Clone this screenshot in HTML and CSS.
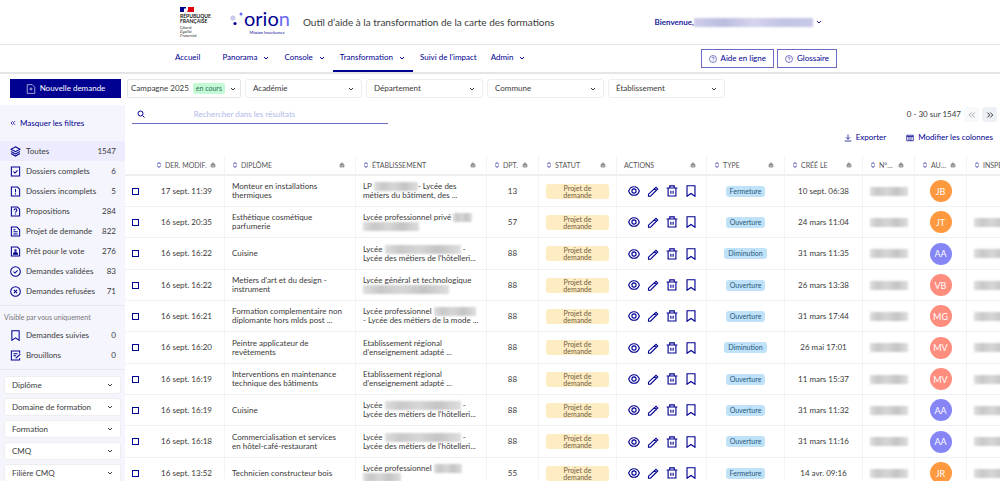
FILE: index.html
```html
<!DOCTYPE html>
<html lang="fr">

<head>
    <meta charset="UTF-8">
    <meta name="viewport" content="width=device-width, initial-scale=1.0">
    <title>Orion - Transformation</title>
    <link rel="stylesheet" href="styles.css">
</head>

<body>
    <svg class="sprite" aria-hidden="true">
        <symbol id="chevron" viewBox="0 0 8 8"><path d="M2 3l2 2 2-2" /></symbol>
        <symbol id="help" viewBox="0 0 16 16"><circle cx="8" cy="8" r="7" /><path d="M5.8 6.4a2.2 2.2 0 1 1 3.3 1.9c-.8.5-1.1.8-1.1 1.6M8 11.3v1.3" /></symbol>
        <symbol id="file-add" viewBox="0 0 16 16"><path d="M2 1h8l4 4v10H2zM8 5.500v5M5.500 8h5" /></symbol>
        <symbol id="search" viewBox="0 0 16 16"><circle cx="7" cy="7" r="5" /><path d="M11 11l4 4" /></symbol>
        <symbol id="left" viewBox="0 0 16 16"><path d="M7.500 3l-5 5 5 5M13.500 3l-5 5 5 5" /></symbol>
        <symbol id="right" viewBox="0 0 16 16"><path d="M2.500 3l5 5-5 5M8.500 3l5 5-5 5" /></symbol>
        <symbol id="stack" viewBox="0 0 16 16"><path d="M8 1.200l6.500 3.600L8 8.400 1.500 4.800zM1.500 8L8 11.600 14.500 8M1.500 11L8 14.600l6.500-3.600" /></symbol>
        <symbol id="box-check" viewBox="0 0 16 16"><path d="M2 1.500h12v13H2zM5 8l2.200 2.200L11 6.300" /></symbol>
        <symbol id="file-alert" viewBox="0 0 16 16"><path d="M2 1.500h9l3 3v10H2zM8 4.500v4.500M8 10.500v1.800" /></symbol>
        <symbol id="file-question" viewBox="0 0 16 16"><path d="M2 1.500h9l3 3v10H2zM6 6.200a2 2 0 1 1 3 1.700c-.7.400-1 .7-1 1.500M8 10.800v1.500" /></symbol>
        <symbol id="file-text" viewBox="0 0 16 16"><path d="M2 1.500h8l4 4v9H2zM5 5.500h3M5 8.500h6M5 11.500h6" /></symbol>
        <symbol id="file-user" viewBox="0 0 16 16"><path d="M2 1.500h9l3 3v10H2z" /><path fill="currentColor" d="M5 12c0-3.500 6-3.500 6 0z" /><circle cx="8" cy="6.500" r="1" /></symbol>
        <symbol id="circle-check" viewBox="0 0 16 16"><circle cx="8" cy="8" r="7" /><path d="M5 8l2.200 2.200L11 6.300" /></symbol>
        <symbol id="circle-cross" viewBox="0 0 16 16"><circle cx="8" cy="8" r="7" /><path d="M5.700 5.700l4.600 4.600M10.300 5.700l-4.600 4.600" /></symbol>
        <symbol id="bookmark" viewBox="0 0 16 16"><path d="M2.700 1h10.600v14L8 11.300 2.700 15z" /></symbol>
        <symbol id="draft" viewBox="0 0 16 16"><path d="M14 5V1.500H2v13h12V12M5 5.500h6M5 8.500h4M8 11.500l1.500-.3L15 6" /></symbol>
        <symbol id="sort" viewBox="0 0 8 8"><path d="M1.500 3L4 .8 6.500 3M1.500 5L4 7.200 6.500 5" /></symbol>
        <symbol id="lock" viewBox="0 0 8 8"><path d="M1.500 3.500h5v3h-5zM2.500 3.500V2.500C2.500.8 5.500.8 5.500 2.500M3 5h2" /></symbol>
        <symbol id="eye" viewBox="0 0 16 16"><path d="M.9 8C2 4.500 5 2.300 8 2.300S14 4.500 15.100 8C14 11.500 11 13.700 8 13.700S2 11.500.9 8z" /><circle cx="8" cy="8" r="2.800" /></symbol>
        <symbol id="pencil" viewBox="0 0 16 16"><path d="M2 15v-2.800L12 3l2.300 2.300-9.600 9.700zM9.800 5l2.500 2.500" /></symbol>
        <symbol id="trash" viewBox="0 0 16 16"><path d="M.8 4h14.400M5 4V1.200h6V4M2.800 4v10.700h10.400V4M6.500 7.500v4M9.500 7.500v4" /></symbol>
        <symbol id="export" viewBox="0 0 16 16"><path d="M8 1v9M4 6.500l4 4 4-4M1.500 14h13" /></symbol>
        <symbol id="columns" viewBox="0 0 16 16"><path d="M1.500 2.500h13v11h-13zM1.500 5h13M6 5v8.500M10 5v8.500" /></symbol>
    </svg>

    <header class="header">
        <div class="container header-content">
            <div class="republique">
                <svg class="flag" viewBox="0 0 14 5"><path fill="#000091" d="M0 0h6v5H0z" /><path fill="#fff" d="M4 1.500h3l1 2L6 5H4z" /><path fill="#e1000f" d="M8 0h6v5H7l1-2z" /></svg>
                <strong>RÉPUBLIQUE<br>FRANÇAISE</strong>
                <em>Liberté<br>Égalité<br>Fraternité</em>
            </div>
            <div class="orion">
                <svg class="dots" viewBox="0 0 14 14"><circle cx="3" cy="6" r="2.600" fill="#cacaf0" /><circle cx="11" cy="2" r="1.500" fill="#6a6af4" /><circle cx="5" cy="11.500" r="1.600" fill="#000091" /></svg>
                <div>
                    <span class="orion-name">orio<span>n</span></span>
                    <span class="orion-mission">Mission InserJeunes</span>
                </div>
            </div>
            <p class="tagline">Outil d’aide à la transformation de la carte des formations</p>
            <button class="user" type="button">Bienvenue, <span class="redacted user-mail"></span><svg class="icon chevron"><use href="#chevron" /></svg></button>
        </div>
    </header>

    <nav class="nav">
        <div class="container nav-content">
            <a class="nav-link first" href="#">Accueil</a>
            <a class="nav-link" href="#">Panorama <svg class="icon chevron"><use href="#chevron" /></svg></a>
            <a class="nav-link" href="#">Console <svg class="icon chevron"><use href="#chevron" /></svg></a>
            <a class="nav-link active" href="#">Transformation <svg class="icon chevron"><use href="#chevron" /></svg></a>
            <a class="nav-link" href="#">Suivi de l'impact</a>
            <a class="nav-link" href="#">Admin <svg class="icon chevron"><use href="#chevron" /></svg></a>
            <div class="nav-buttons">
                <button type="button"><svg class="icon thin"><use href="#help" /></svg>Aide en ligne</button>
                <button type="button"><svg class="icon thin"><use href="#help" /></svg>Glossaire</button>
            </div>
        </div>
    </nav>

    <div class="filters">
        <button class="new-request" type="button"><svg class="icon"><use href="#file-add" /></svg>Nouvelle demande</button>
        <button class="campaign" type="button">Campagne 2025 <span class="current">en cours</span><svg class="icon chevron"><use href="#chevron" /></svg></button>
        <select class="select" aria-label="Académie"><option>Académie</option></select>
        <select class="select" aria-label="Département"><option>Département</option></select>
        <select class="select" aria-label="Commune"><option>Commune</option></select>
        <select class="select" aria-label="Établissement"><option>Établissement</option></select>
    </div>

    <div class="layout">
        <aside class="sidebar">
            <button class="hide-filters" type="button"><svg class="icon"><use href="#left" /></svg>Masquer les filtres</button>
            <ul class="status-list">
                <li><a class="selected" href="#"><svg class="icon"><use href="#stack" /></svg>Toutes<span>1547</span></a></li>
                <li><a href="#"><svg class="icon"><use href="#box-check" /></svg>Dossiers complets<span>6</span></a></li>
                <li><a href="#"><svg class="icon"><use href="#file-alert" /></svg>Dossiers incomplets<span>5</span></a></li>
                <li><a href="#"><svg class="icon"><use href="#file-question" /></svg>Propositions<span>284</span></a></li>
                <li><a href="#"><svg class="icon"><use href="#file-text" /></svg>Projet de demande<span>822</span></a></li>
                <li><a href="#"><svg class="icon"><use href="#file-user" /></svg>Prêt pour le vote<span>276</span></a></li>
                <li><a href="#"><svg class="icon"><use href="#circle-check" /></svg>Demandes validées<span>83</span></a></li>
                <li><a href="#"><svg class="icon"><use href="#circle-cross" /></svg>Demandes refusées<span>71</span></a></li>
            </ul>
            <p class="private">Visible par vous uniquement</p>
            <ul class="status-list">
                <li><a href="#"><svg class="icon"><use href="#bookmark" /></svg>Demandes suivies<span>0</span></a></li>
                <li><a href="#"><svg class="icon"><use href="#draft" /></svg>Brouillons<span>0</span></a></li>
            </ul>
            <div class="side-filters">
                <select class="select" aria-label="Diplôme"><option>Diplôme</option></select>
                <select class="select" aria-label="Domaine de formation"><option>Domaine de formation</option></select>
                <select class="select" aria-label="Formation"><option>Formation</option></select>
                <select class="select" aria-label="CMQ"><option>CMQ</option></select>
                <select class="select" aria-label="Filière CMQ"><option>Filière CMQ</option></select>
            </div>
        </aside>

        <main class="main">
            <div class="toolbar">
                <label class="search"><svg class="icon"><use href="#search" /></svg><input type="search" aria-label="Rechercher" placeholder="Rechercher dans les résultats"></label>
                <div class="pagination">
                    0 - 30 sur 1547
                    <button type="button" aria-label="Page précédente" disabled><svg class="icon"><use href="#left" /></svg></button>
                    <button type="button" aria-label="Page suivante"><svg class="icon"><use href="#right" /></svg></button>
                </div>
            </div>
            <div class="table-actions">
                <button type="button"><svg class="icon"><use href="#export" /></svg>Exporter</button>
                <button type="button"><svg class="icon"><use href="#columns" /></svg>Modifier les colonnes</button>
            </div>
            <table class="table">
                <colgroup>
                    <col class="c-check"><col class="c-modif"><col class="c-wide"><col class="c-wide"><col class="c-small"><col class="c-medium">
                    <col class="c-actions"><col class="c-medium"><col class="c-medium"><col class="c-small"><col class="c-small"><col class="c-wide">
                </colgroup>
                <thead>
                    <tr id="head"></tr>
                </thead>
                <tbody id="rows"></tbody>
            </table>
        </main>
    </div>
    <script src="script.js"></script>
</body>

</html>
```

FILE: styles.css
```css
*,
*::before,
*::after {
    box-sizing: border-box;
}

body {
    display: flex;
    flex-direction: column;
    height: 100vh;
    margin: 0;
    overflow: hidden;
    font-family: Lato, "Noto Sans", sans-serif;
    font-size: 8px;
    line-height: 9px;
    color: #3a3a3a;
    background: #fff;
}

p,
ul {
    margin: 0;
    padding: 0;
    list-style: none;
}

a {
    color: inherit;
    text-decoration: none;
}

button,
input,
select {
    margin: 0;
    padding: 0;
    border: 0;
    font: inherit;
    color: inherit;
    background: none;
}

button {
    display: flex;
    align-items: center;
    cursor: pointer;
}

.sprite {
    display: none;
}

.icon {
    flex: none;
    width: 8px;
    height: 8px;
    fill: none;
    stroke: currentColor;
    stroke-width: 2;
}

.icon.thin {
    stroke-width: 1;
}

.icon.chevron {
    stroke-width: 1;
}

.redacted {
    display: inline-block;
    height: 9px;
    vertical-align: top;
    background: linear-gradient(90deg, #dedede, #c8c8c8 20%, #d6d6d6 45%, #c4c4c4 70%, #dedede);
    filter: blur(1px);
}

.container {
    display: flex;
    align-items: center;
    width: 100%;
    max-width: 674px;
    margin: 0 auto;
}

/* header */
.header {
    flex: none;
    border-bottom: 1px solid #e5e5e5;
}

.header-content {
    height: 44px;
    padding: 0 14px 0 17px;
}

.republique {
    display: flex;
    flex-direction: column;
    width: 50px;
    font-size: 5px;
    line-height: 5px;
    color: #161616;
}

.flag {
    width: 14px;
    height: 5px;
    margin-bottom: 2px;
}

.republique em {
    margin-top: 2px;
    font-family: "Liberation Serif", serif;
    font-size: 4px;
    line-height: 4px;
}

.orion {
    display: flex;
    margin-bottom: 3px;
    color: #000091;
}

.dots {
    width: 14px;
    height: 14px;
    margin-top: 6px;
}

.orion-name {
    display: block;
    font-size: 20px;
    line-height: 24px;
}

.orion-name span {
    color: #6a6af4;
}

.orion-mission {
    display: block;
    font-size: 4px;
    line-height: 5px;
    text-align: center;
}

.tagline {
    margin-left: 13px;
    font-size: 10px;
    line-height: 12px;
}

.user {
    margin-left: auto;
    font-weight: 700;
    color: #22229c;
}

.user-mail {
    width: 119px;
    margin-right: 2px;
    background: linear-gradient(90deg, #cdcdea, #bcbce0 25%, #d4d4ee 50%, #c2c2e4 75%, #c8c8e8);
}

/* nav */
.nav {
    flex: none;
    border-bottom: 2px solid #e5e5e5;
    color: #000091;
}

.nav-content {
    height: 27px;
}

.nav-link {
    display: flex;
    align-items: center;
    gap: 5px;
    height: 27px;
    padding: 0 7px;
    border-bottom: 2px solid transparent;
}

.nav-link.first {
    margin: 0 8px 0 5px;
}

.nav-link.active {
    border-color: #000091;
}

.nav-buttons {
    display: flex;
    gap: 3px;
    margin-left: auto;
}

.nav-buttons button {
    gap: 4px;
    height: 19px;
    padding: 0 7px;
    border: 1px solid #6a6ac0;
}

/* filters */
.filters {
    display: flex;
    flex: none;
    gap: 4px;
    padding: 5px 10px 7px;
}

.new-request {
    justify-content: center;
    gap: 4px;
    width: 111px;
    height: 19px;
    margin-right: 2px;
    color: #fff;
    background: #000091;
}

.new-request .icon {
    width: 10px;
    height: 10px;
    stroke-width: 1;
}

.campaign {
    width: 114px;
    height: 19px;
    padding: 0 3px;
    border: 1px solid #e5e5e5;
    border-radius: 2px;
}

.current {
    margin: 0 auto 0 4px;
    padding: 1px 3px;
    border-radius: 2px;
    font-size: 7px;
    color: #297254;
    background: #c3fad5;
}

.select {
    appearance: none;
    width: 117px;
    height: 19px;
    padding: 0 7px;
    border: 1px solid #eee;
    border-radius: 3px;
    background: #fff url("data:image/svg+xml,%3Csvg xmlns='http://www.w3.org/2000/svg' width='8' height='8' fill='none' stroke='%233a3a3a'%3E%3Cpath d='M2 3l2 2 2-2'/%3E%3C/svg%3E") no-repeat right 6px center;
}

.layout {
    display: flex;
    flex: 1;
    min-height: 0;
}

/* sidebar */
.sidebar {
    flex: none;
    width: 125px;
    overflow: hidden;
    background: #f5f5fe;
}

.hide-filters {
    gap: 4px;
    height: 36px;
    padding: 0 10px;
    color: #000091;
}

.hide-filters .icon {
    width: 6px;
    height: 6px;
}

.status-list {
    padding-bottom: 4px;
    border-bottom: 1px solid #e8e8f4;
}

.status-list a {
    display: flex;
    align-items: center;
    gap: 5px;
    height: 20px;
    padding: 0 9px 0 10px;
}

.status-list a.selected {
    background: #ececfe;
}

.status-list .icon {
    width: 11px;
    height: 11px;
    stroke-width: 1.5;
    color: #000091;
}

.status-list span {
    margin-left: auto;
}

.private {
    padding: 7px 4px 3px;
    font-size: 7px;
    color: #777;
}

.side-filters {
    display: grid;
    gap: 4px;
    padding: 6px 4px;
}

.side-filters .select {
    width: 100%;
    height: 18px;
}

/* main */
.main {
    flex: 1;
    min-width: 0;
    overflow: hidden;
}

.toolbar {
    display: flex;
    justify-content: space-between;
    align-items: center;
    padding: 0 3px 0 7px;
}

.search {
    display: flex;
    align-items: center;
    width: 256px;
    height: 19px;
    padding-left: 5px;
    border-bottom: 1px solid #6a6ac0;
    color: #000091;
}

.search input {
    flex: 1;
    margin-right: 34px;
    outline: none;
    text-align: center;
}

.search input::placeholder {
    color: #b1b9e8;
}

.pagination {
    display: flex;
    align-items: center;
    gap: 3px;
}

.pagination button {
    justify-content: center;
    width: 15px;
    height: 15px;
    border-radius: 3px;
    background: #edf0f5;
}

.pagination button:disabled {
    color: #aaa;
    background: #f8f9fb;
}

.table-actions {
    display: flex;
    justify-content: flex-end;
    gap: 20px;
    padding: 9px 7px 14px;
    color: #000091;
}

.table-actions button {
    gap: 4px;
}

.table-actions .icon {
    stroke-width: 1.5;
}

.table {
    width: 970px;
    table-layout: fixed;
    border-collapse: separate;
    border-spacing: 0;
}

.c-check {
    width: 24px;
}

.c-modif {
    width: 76px;
}

.c-wide {
    width: 131px;
}

.c-small {
    width: 52px;
}

.c-medium {
    width: 78px;
}

.c-actions {
    width: 90px;
}

.table th {
    height: 20px;
    padding: 0 10px 0 7px;
    border-right: 1px solid #f4f4f6;
    border-bottom: 2px solid #eee;
    font-size: 7px;
    font-weight: 400;
    color: #555;
}

.table th:first-child,
.table td:first-child {
    padding: 0 0 0 7px;
    border-right: 0;
}

.th-content {
    display: flex;
    align-items: center;
    gap: 3px;
    white-space: nowrap;
}

.th-content .icon {
    width: 6px;
    height: 6px;
    stroke-width: 1;
}

.th-content .icon.sort {
    color: #000091;
}

.th-content .icon.lock {
    margin-left: auto;
}

.table td {
    height: 31px;
    padding: 0 7px;
    border-right: 1px solid #f4f4f6;
    border-bottom: 1px solid #eef0f4;
}

.table tr:nth-child(3n) td {
    height: 32px;
}

.table td.center {
    padding: 0;
    text-align: center;
}

.table input {
    display: block;
    appearance: none;
    width: 7px;
    height: 7px;
    border: 1px solid #000091;
}

.status {
    display: block;
    padding: 1px 12px 0;
    border-radius: 3px;
    font-size: 7px;
    line-height: 7px;
    text-align: center;
    color: #716043;
    background: #feecc2;
}

.type {
    display: inline-block;
    padding: 1px 4px;
    border-radius: 3px;
    font-size: 7px;
    color: #27587c;
    background: #bfe2f8;
}

.row-actions {
    display: flex;
    gap: 7px;
    padding-left: 4px;
    color: #000091;
}

.row-actions .icon {
    width: 12px;
    height: 12px;
    stroke-width: 1.5;
}

.avatar {
    display: flex;
    align-items: center;
    justify-content: center;
    width: 22px;
    height: 22px;
    margin: 0 auto;
    border-radius: 50%;
    font-size: 9px;
    color: #fff;
}

.avatar.orange {
    background: #ff9940;
}

.avatar.purple {
    background: #8585f6;
}

.avatar.coral {
    background: #ff8d7e;
}
```

FILE: script.js
```js
const columns = ['DER. MODIF.', 'DIPLÔME', 'ÉTABLISSEMENT', 'DPT.', 'STATUT', 'ACTIONS', 'TYPE', 'CRÉÉ LE', 'N°…', 'AU…', 'INSPECTEUR'];

// a number in the school name is the width of a masked part
const rows = [
    ['17 sept. 11:39', 'Monteur en installations<br>thermiques', ['LP ', 44, '- Lycée des<br>métiers du bâtiment, des ...'], 13, 'Fermeture', '10 sept. 06:38', 'JB', 'orange', 0],
    ['16 sept. 20:35', 'Esthétique cosmétique<br>parfumerie', ['Lycée professionnel privé ', 19, '<br>', 56], 57, 'Ouverture', '24 mars 11:04', 'JT', 'orange', 40],
    ['16 sept. 16:22', 'Cuisine', ['Lycée ', 76, ' -<br>Lycée des métiers de l\'hôtelleri...'], 88, 'Diminution', '31 mars 11:35', 'AA', 'purple', 40],
    ['16 sept. 16:22', 'Metiers d\'art et du design -<br>instrument', ['Lycée général et technologique<br>', 86], 88, 'Ouverture', '26 mars 13:38', 'VB', 'coral', 40],
    ['16 sept. 16:21', 'Formation complementaire non<br>diplomante hors mlds post ...', ['Lycée professionnel ', 42, '<br>- Lycée des métiers de la mode ...'], 88, 'Ouverture', '31 mars 17:44', 'MG', 'coral', 40],
    ['16 sept. 16:20', 'Peintre applicateur de<br>revêtements', ['Etablissement régional<br>d\'enseignement adapté ...'], 88, 'Diminution', '26 mai 17:01', 'MV', 'coral', 40],
    ['16 sept. 16:19', 'Interventions en maintenance<br>technique des bâtiments', ['Etablissement régional<br>d\'enseignement adapté ...'], 88, 'Ouverture', '11 mars 15:37', 'MV', 'coral', 40],
    ['16 sept. 16:19', 'Cuisine', ['Lycée ', 76, ' -<br>Lycée des métiers de l\'hôtelleri...'], 88, 'Ouverture', '31 mars 11:32', 'AA', 'purple', 40],
    ['16 sept. 16:18', 'Commercialisation et services<br>en hôtel-café-restaurant', ['Lycée ', 76, ' -<br>Lycée des métiers de l\'hôtelleri...'], 88, 'Ouverture', '31 mars 11:16', 'AA', 'purple', 40],
    ['16 sept. 13:52', 'Technicien constructeur bois', ['Lycée professionnel ', 28, '<br>', 38], 55, 'Fermeture', '14 avr. 09:16', 'JR', 'orange', 40]
];

const icon = (name, cls = '') => `<svg class="icon ${cls}"><use href="#${name}" /></svg>`;
const masked = width => width ? `<span class="redacted" style="width: ${width}px"></span>` : '';
const action = (name, label) => `<button type="button" aria-label="${label}">${icon(name)}</button>`;

document.getElementById('head').innerHTML = '<th></th>' + columns.map(name =>
    `<th><div class="th-content">${name === 'ACTIONS' ? '' : icon('sort', 'sort')}${name}${icon('lock', 'lock')}</div></th>`
).join('');

document.getElementById('rows').innerHTML = rows.map(([modif, diploma, school, dept, type, created, initials, color, inspector]) => `
    <tr>
        <td><input type="checkbox" aria-label="Sélectionner"></td>
        <td class="center">${modif}</td>
        <td>${diploma}</td>
        <td>${school.map(part => typeof part === 'number' ? masked(part) : part).join('')}</td>
        <td class="center">${dept}</td>
        <td><span class="status">Projet de demande</span></td>
        <td><div class="row-actions">${action('eye', 'Voir')}${action('pencil', 'Modifier')}${action('trash', 'Supprimer')}${action('bookmark', 'Suivre')}</div></td>
        <td class="center"><span class="type">${type}</span></td>
        <td class="center">${created}</td>
        <td class="center">${masked(38)}</td>
        <td class="center"><span class="avatar ${color}">${initials}</span></td>
        <td>${masked(inspector)}</td>
    </tr>`).join('');
```
